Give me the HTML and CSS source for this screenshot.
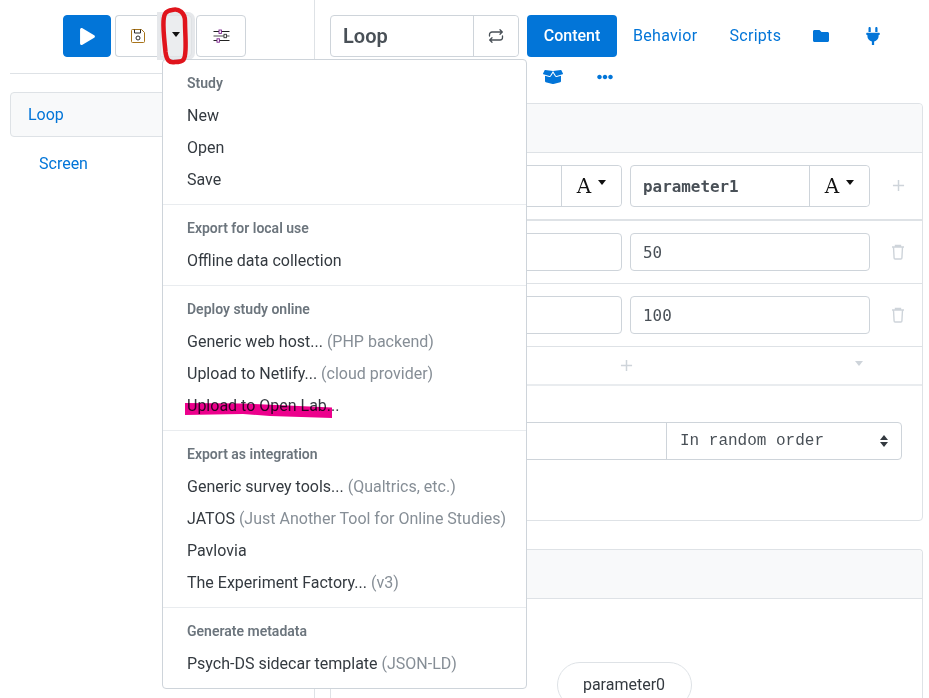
FILE: index.html
```html
<!DOCTYPE html>
<html lang="en">
<head>
<meta charset="utf-8">
<title>lab.js builder</title>
<link rel="stylesheet" href="styles.css">
</head>
<body>
<div class="app">
  <aside class="sidebar">
    <div class="toolbar">
      <button class="btn btn-play" aria-label="Run">
        <svg class="ico-play" viewBox="0 0 448 512"><path d="M424.4 214.7L72.4 6.6C43.8-10.3 0 6.1 0 47.9V464c0 37.5 40.7 60.1 72.4 41.3l352-208c31.4-18.5 31.5-64.1 0-82.6z"/></svg>
      </button>
      <div class="btn-group">
        <button class="btn btn-save" aria-label="Save">
          <svg class="ico-16" viewBox="0 0 16 16" fill="none" stroke="#2b2b2b" stroke-width="1"><path d="M1.5 2.5a1 1 0 0 1 1-1h9l3 3v9a1 1 0 0 1-1 1h-11a1 1 0 0 1-1-1z" stroke="#a8741a"/><path d="M4.5 1.5v3.5h6v-3.5"/><circle cx="8" cy="10" r="2"/></svg>
        </button>
        <button class="btn btn-caret" aria-label="More"><span class="caret caret-black"></span></button>
      </div>
      <button class="btn btn-options" aria-label="Options">
        <svg class="ico-sliders" viewBox="0 0 16 14" fill="none"><path d="M0 2.5h16M0 11.5h16" stroke="#222" stroke-width="1"/><path d="M0 7h16" stroke="#888" stroke-width="1.5"/><rect x="5.5" y="1" width="2.4" height="3.4" fill="#fff" stroke="#7a1f8c" stroke-width=".9"/><rect x="10.5" y="5.3" width="2.4" height="3.4" fill="#fff" stroke="#333" stroke-width=".9"/><rect x="3.5" y="9.8" width="2.4" height="3.4" fill="#fff" stroke="#7a1f8c" stroke-width=".9"/></svg>
      </button>
    </div>
    <hr class="side-rule">
    <nav class="tree">
      <a class="tree-item tree-active">Loop</a>
      <a class="tree-item tree-child">Screen</a>
    </nav>
  </aside>

  <main class="main">
    <header class="top">
      <div class="title-group">
        <span class="title-input">Loop</span>
        <button class="title-btn" aria-label="Change type">
          <svg class="ico-16" viewBox="0 0 16 16" fill="none" stroke="#495057" stroke-width="1.3" stroke-linecap="round" stroke-linejoin="round"><path d="M1.5 8V6.5a2.5 2.5 0 0 1 2.5-2.5h10M12 1.8L14.3 4 12 6.2"/><path d="M14.5 8v1.5a2.5 2.5 0 0 1-2.5 2.5H2M4 9.8L1.7 12 4 14.2"/></svg>
        </button>
      </div>
      <nav class="tabs">
        <a class="tab tab-active">Content</a>
        <a class="tab">Behavior</a>
        <a class="tab">Scripts</a>
        <a class="tab tab-icon"><svg class="ico-folder" viewBox="0 0 512 512"><path d="M464 128H272l-64-64H48C21.49 64 0 85.49 0 112v288c0 26.51 21.49 48 48 48h416c26.51 0 48-21.49 48-48V176c0-26.51-21.49-48-48-48z"/></svg></a>
        <a class="tab tab-icon tab-plug"><svg class="ico-plug" viewBox="0 0 384 512"><path d="M256 144V32c0-17.673 14.327-32 32-32s32 14.327 32 32v112h-64zm112 16H16c-8.837 0-16 7.163-16 16v32c0 8.837 7.163 16 16 16h16v32c0 77.406 54.969 141.971 128 156.796V512h64v-99.204c73.031-14.825 128-79.39 128-156.796v-32h16c8.837 0 16-7.163 16-16v-32c0-8.837-7.163-16-16-16zM128 144V32c0-17.673-14.327-32-32-32S64 14.327 64 32v112h64z"/></svg></a>
        <a class="tab tab-icon tab-box"><svg class="ico-box" viewBox="0 0 640 512"><path d="M425.7 256c-16.9 0-32.8-9-41.4-23.4L320 126l-64.2 106.6c-8.7 14.5-24.6 23.5-41.5 23.5-4.5 0-9-.6-13.3-1.9L64 215v178c0 14.7 10 27.5 24.2 31l216.2 54.1c10.2 2.5 20.9 2.5 31 0L551.8 424c14.2-3.6 24.2-16.4 24.2-31V215l-137 39.1c-4.3 1.3-8.8 1.9-13.3 1.9zm212.6-112.2L586.8 41c-3.1-6.2-9.8-9.8-16.7-8.9L320 64l91.7 152.1c3.8 6.3 11.4 9.3 18.5 7.3l197.9-56.5c9.9-2.9 14.7-13.9 10.2-23.1zM53.2 41L1.7 143.8c-4.6 9.2.3 20.2 10.1 23l197.9 56.5c7.1 2 14.7-1 18.5-7.3L320 64 69.8 32.1c-6.9-.8-13.5 2.7-16.6 8.9z"/></svg></a>
        <a class="tab tab-icon tab-dots"><svg class="ico-dots" viewBox="0 0 512 512"><path d="M328 256c0 39.8-32.2 72-72 72s-72-32.2-72-72 32.2-72 72-72 72 32.2 72 72zm104-72c-39.8 0-72 32.2-72 72s32.2 72 72 72 72-32.2 72-72-32.2-72-72-72zm-352 0c-39.8 0-72 32.2-72 72s32.2 72 72 72 72-32.2 72-72-32.2-72-72-72z"/></svg></a>
      </nav>
    </header>

    <section class="card card-first">
      <div class="card-head"></div>
      <div class="grid-row row-head">
        <div class="input-group"><span class="field mono-bold">parameter0</span><button class="type-btn"><span class="type-a">A</span><span class="caret caret-black"></span></button></div>
        <div class="input-group"><span class="field mono-bold">parameter1</span><button class="type-btn"><span class="type-a">A</span><span class="caret caret-black"></span></button></div>
        <svg class="ico-plus" viewBox="0 0 14 14"><path d="M7 1v12M1 7h12"/></svg>
      </div>
      <div class="grid-row row-body">
        <div class="input-group"><span class="field mono">10</span></div>
        <div class="input-group"><span class="field mono">50</span></div>
        <svg class="ico-trash" viewBox="0 0 14 16"><path d="M1 3h12M4.5 3V1.5h5V3M2.5 3l.6 11a1 1 0 0 0 1 1h5.8a1 1 0 0 0 1-1l.6-11"/></svg>
      </div>
      <div class="grid-row row-body row-last">
        <div class="input-group"><span class="field mono">20</span></div>
        <div class="input-group"><span class="field mono">100</span></div>
        <svg class="ico-trash" viewBox="0 0 14 16"><path d="M1 3h12M4.5 3V1.5h5V3M2.5 3l.6 11a1 1 0 0 0 1 1h5.8a1 1 0 0 0 1-1l.6-11"/></svg>
      </div>
      <div class="row-foot">
        <svg class="ico-plus" viewBox="0 0 14 14"><path d="M7 1v12M1 7h12"/></svg>
        <span class="caret caret-muted"></span>
      </div>
      <div class="card-body">
        <div class="input-group select-group">
          <span class="field select-label">Iterate</span>
          <span class="select">In random order
            <svg class="ico-updown" viewBox="0 0 8 12"><path d="M4 0l4 5H0zM4 12L0 7h8z"/></svg>
          </span>
        </div>
      </div>
    </section>

    <section class="card card-second">
      <div class="card-head"></div>
      <div class="pill-row"><span class="pill">parameter0</span></div>
    </section>
  </main>
</div>

<div class="menu">
  <h6 class="menu-head">Study</h6>
  <a class="menu-item">New</a>
  <a class="menu-item">Open</a>
  <a class="menu-item">Save</a>
  <div class="menu-rule"></div>
  <h6 class="menu-head">Export for local use</h6>
  <a class="menu-item">Offline data collection</a>
  <div class="menu-rule"></div>
  <h6 class="menu-head">Deploy study online</h6>
  <a class="menu-item">Generic web host... <span class="muted">(PHP backend)</span></a>
  <a class="menu-item">Upload to Netlify... <span class="muted">(cloud provider)</span></a>
  <a class="menu-item">Upload to Open Lab...</a>
  <div class="menu-rule"></div>
  <h6 class="menu-head">Export as integration</h6>
  <a class="menu-item">Generic survey tools... <span class="muted">(Qualtrics, etc.)</span></a>
  <a class="menu-item">JATOS <span class="muted">(Just Another Tool for Online Studies)</span></a>
  <a class="menu-item">Pavlovia</a>
  <a class="menu-item">The Experiment Factory... <span class="muted">(v3)</span></a>
  <div class="menu-rule"></div>
  <h6 class="menu-head">Generate metadata</h6>
  <a class="menu-item">Psych-DS sidecar template <span class="muted">(JSON-LD)</span></a>
</div>

<svg class="mark-red" viewBox="0 0 30 60" fill="none"><path d="M12 4C19 2 25 7 25 15C25 26 26 34 25.5 44C25 54 24 56 15 56C9 57 6.5 54 5.5 46C4.5 35 3 25 3.5 15C4 7 6 5 12 4Z"/></svg>
<svg class="mark-pink" viewBox="0 0 147 15"><path d="M0 0L58 0.5L147 4.5V15L85 13L58 11L0 12Z"/></svg>
</body>
</html>
```

FILE: styles.css
```css
* { box-sizing: border-box; }
html, body { margin: 0; padding: 0; height: 100%; overflow: hidden; background: #fff; }
body { font-family: Roboto, "Noto Sans", sans-serif; font-size: 16px; line-height: 24px; color: #343a40; position: relative; }
button { font: inherit; color: inherit; background: #fff; padding: 0; cursor: pointer; display: flex; align-items: center; justify-content: center; }

.app { display: flex; height: 698px; overflow: hidden; }

/* Sidebar */
.sidebar { width: 315px; flex: none; border-right: 1px solid #dee2e6; padding-left: 10px; }
.toolbar { display: flex; gap: 4px; justify-content: center; padding: 15px 5px 0 0; margin-left: -10px; }
.btn { height: 42px; border: 1px solid #ced4da; border-radius: 4px; }
.btn-play { width: 48px; background: #0275d8; border-color: #0275d8; }
.ico-play { width: 15px; height: 17px; fill: #fff; }
.btn-group { display: flex; }
.btn-save { width: 45px; border-right: 0; border-radius: 4px 0 0 4px; }
.btn-caret { width: 32px; background: #ebedef; border-color: #dfe2e5; border-radius: 0 4px 4px 0; box-shadow: 0 0 0 3px #e6e8eb; position: relative; }
.btn-caret .caret { margin-bottom: 3px; }
.btn-options { width: 50px; }
.ico-16 { width: 16px; height: 16px; }
.ico-sliders { width: 17px; height: 14px; }
.caret { display: inline-block; width: 0; height: 0; border-style: solid; border-width: 5px 4.8px 0; border-color: transparent; }
.caret-black { border-top-color: #111; }
.caret-muted { border-top-color: #ced4da; }
.side-rule { border: 0; border-top: 1px solid #dee2e6; margin: 16px 0 18px; }
.tree { display: flex; flex-direction: column; }
.tree-item { color: #0275d8; display: block; }
.tree-active { height: 45px; width: 290px; background: #f8f9fa; border: 1px solid #dee2e6; border-radius: 4px; padding: 10px 17px; }
.tree-child { padding: 15px 0 0 29px; }

/* Main */
.main { flex: 1; min-width: 0; padding: 15px 6px 0 15px; }
.top { display: flex; gap: 8px; height: 88px; }
.title-group { display: flex; width: 189px; height: 42px; border: 1px solid #ced4da; border-radius: 4px; flex: none; }
.title-input { flex: 1; font-size: 20px; font-weight: 600; color: #495057; padding: 8px 12px; }
.title-btn { width: 45px; flex: none; border: 0; border-left: 1px solid #ced4da; border-radius: 0 4px 4px 0; }
.tabs { display: flex; flex-wrap: wrap; flex: 1; align-content: flex-start; }
.tab { height: 42px; padding: 0 16px; color: #0275d8; border-radius: 4px; display: flex; align-items: center; letter-spacing: .3px; }
.tab-active { background: #0275d8; color: #fff; font-weight: 500; width: 90px; justify-content: center; padding: 0; letter-spacing: 0; }
.tab-icon svg { fill: #0275d8; display: block; }
.tab-plug { padding-left: 21px; }
.tab-box, .tab-dots { height: 40px; }
.tab-dots { margin-left: 2px; }
.ico-folder { width: 16px; height: 16px; }
.ico-plug { width: 14px; height: 18px; }
.ico-box { width: 20px; height: 16px; }
.ico-dots { width: 16px; height: 16px; }

.card { border: 1px solid #dee2e6; border-radius: 4px; }
.card-first { height: 418px; }
.card-second { margin-top: 28px; height: 149px; overflow: hidden; border-bottom: 0; border-radius: 4px 4px 0 0; }
.card-head { height: 49px; background: #f8f9fa; border-bottom: 1px solid #dee2e6; border-radius: 4px 4px 0 0; }

.grid-row { display: grid; grid-template-columns: 1fr 240px 40px; gap: 8px; align-items: center; padding: 0 4px 0 8px; }
.row-head { height: 68px; border-bottom: 2px solid #dee2e6; padding-bottom: 1px; }
.row-body { height: 63px; border-bottom: 1px solid #dee2e6; }
.row-last { height: 63px; }
.row-head .input-group { height: 42px; }
.input-group { display: flex; height: 38px; border: 1px solid #ced4da; border-radius: 4px; }
.field { flex: 1; padding: 7px 12px 5px; min-width: 0; }
.mono { font-family: "DejaVu Sans Mono", monospace; font-size: 15.9px; color: #495057; }
.mono-bold { font-family: "DejaVu Sans Mono", monospace; font-size: 15.9px; font-weight: 700; color: #495057; padding-top: 9px; }
.type-btn { width: 60px; flex: none; border: 0; border-left: 1px solid #ced4da; border-radius: 0 4px 4px 0; gap: 7px; }
.type-a { font-family: "DejaVu Serif", serif; font-size: 20px; color: #111; }
.type-btn .caret { margin-bottom: 6px; }
.ico-plus { width: 13px; height: 13px; fill: none; stroke: #ced4da; stroke-width: 1.6; justify-self: center; }
.ico-trash { width: 14px; height: 16px; fill: none; stroke: #ced4da; stroke-width: 1.4; justify-self: center; }
.row-foot { height: 39px; display: grid; grid-template-columns: 1fr auto 1fr; align-items: center; justify-items: center; border-bottom: 2px solid #e9ecef; }
.row-foot .ico-plus { grid-column: 2; }
.row-foot .caret { grid-column: 3; justify-self: end; margin-right: 59px; margin-bottom: 5px; }
.card-body { padding: 36px 20px; }
.select-group { display: flex; }
.select-label { color: #495057; }
.select { width: 235px; flex: none; border-left: 1px solid #ced4da; display: flex; align-items: center; justify-content: space-between; padding: 0 13px; font-family: "Liberation Mono", monospace; font-size: 16px; color: #495057; }
.ico-updown { width: 8px; height: 12px; fill: #343a40; }
.pill-row { display: flex; justify-content: center; padding: 63px 5px 0 0; }
.pill { height: 46px; width: 135px; flex: none; border: 1px solid #dee2e6; border-radius: 23px; text-align: center; padding-top: 10px; color: #343a40; }

/* Dropdown menu over the page */
.menu { position: absolute; left: 162px; top: 59px; width: 365px; height: 630px; background: #fff; border: 1px solid #ced4da; border-radius: 4px; padding: 7px 0 8px; }
.menu-head { margin: 0; height: 32px; padding: 0 24px; font-size: 14px; line-height: 32px; font-weight: 600; color: #6c757d; }
.menu-item { display: block; height: 32px; padding: 1px 24px 0; line-height: 32px; color: #343a40; white-space: nowrap; }
.muted { color: #868e96; }
.menu-rule { height: 1px; margin: 9px 0 7px; background: #e9ecef; }

/* Hand-drawn annotations over the screenshot */
.mark-red { position: absolute; left: 160px; top: 6px; width: 30px; height: 60px; overflow: visible; }
.mark-red path { stroke: #e0141c; stroke-width: 4.5; }
.mark-pink { position: absolute; left: 185px; top: 403px; width: 147px; height: 15px; mix-blend-mode: multiply; }
.mark-pink path { fill: #ec008c; }
```
